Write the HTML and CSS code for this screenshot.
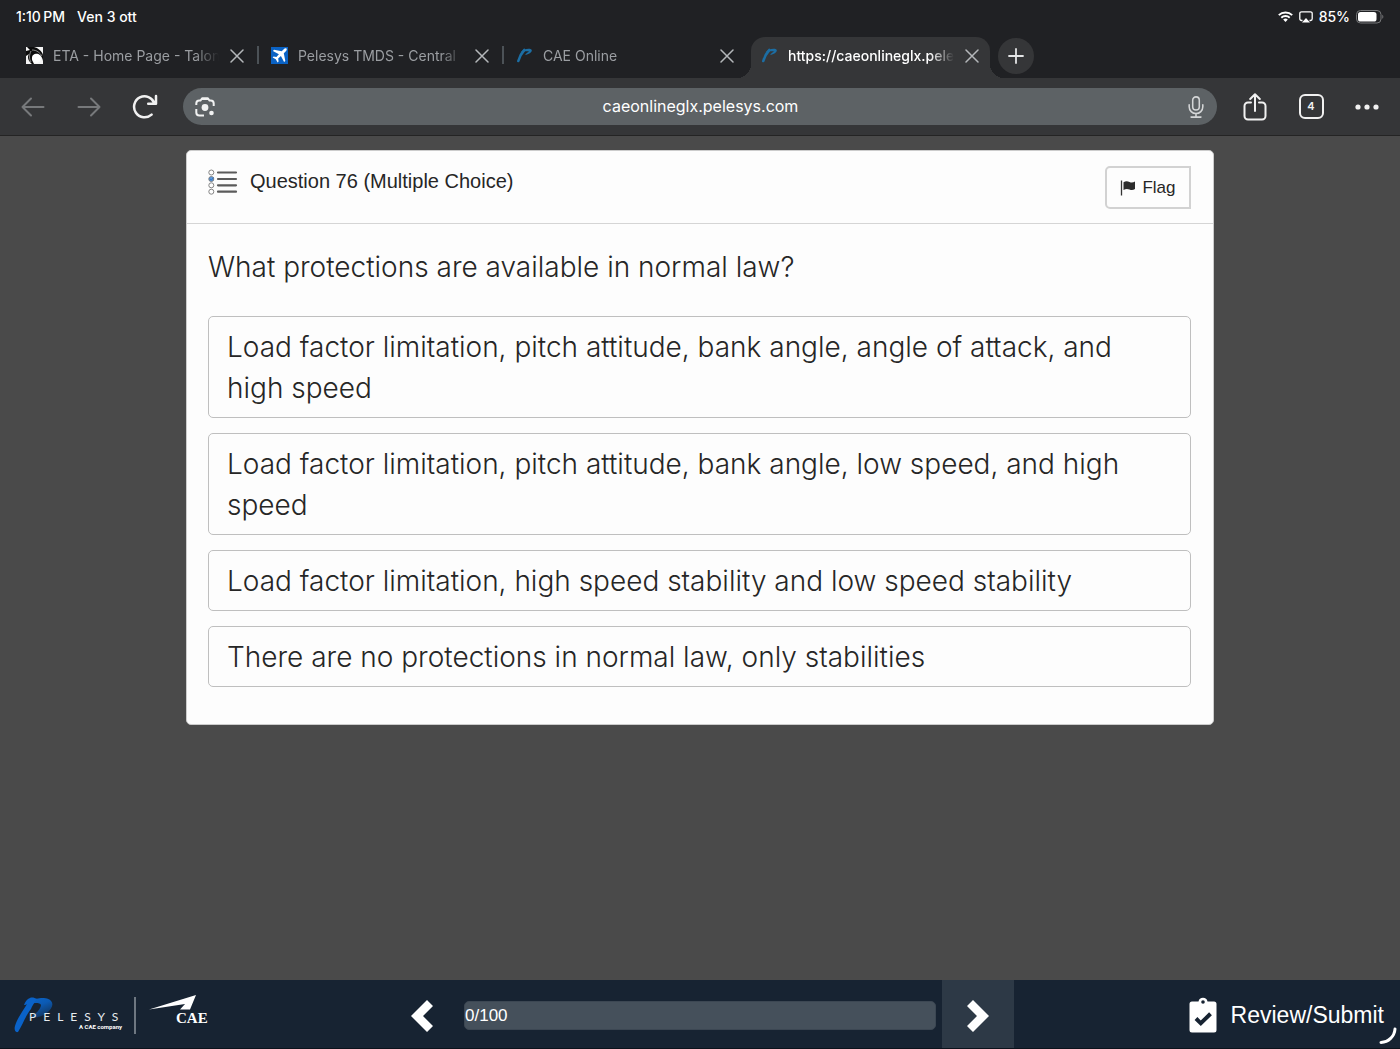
FILE: index.html
```html
<!DOCTYPE html>
<html lang="en">
<head>
<meta charset="utf-8">
<meta name="viewport" content="width=device-width, initial-scale=1">
<title>caeonlineglx.pelesys.com</title>
<link rel="stylesheet" href="styles.css">
</head>
<body>
<svg class="defs" width="0" height="0" aria-hidden="true">
  <symbol id="close" viewBox="0 0 14 14"><path d="M1 1l12 12M13 1L1 13" fill="none" stroke="currentColor" stroke-width="1.5" stroke-linecap="round"/></symbol>
  <symbol id="swoosh" viewBox="0 0 17 17"><path d="M2.300 14C3.500 10 5.500 6 8.300 3" fill="none" stroke="#1c6ea4" stroke-width="2.600" stroke-linecap="round"/><path d="M4.500 5.500C7 2.300 12 1.200 15 2.200C17.500 3.500 14 7.500 9 7.800C10 6.500 11.500 5.500 13 4.500C10 4 7 4.800 4.500 5.500Z" fill="#1c6ea4"/></symbol>
</svg>

<header class="chrome">
  <div class="status">
    <span>1:10&#8201;PM</span>
    <span>Ven 3 ott</span>
    <span class="status-end">
      <svg width="15" height="11" viewBox="0 0 15 11" aria-hidden="true"><g fill="none" stroke="#fff" stroke-width="1.900"><path d="M.8 4.200a9.500 9.500 0 0 1 13.400 0"/><path d="M3.300 6.700a6 6 0 0 1 8.400 0"/></g><path d="M7.500 11L5.200 8.600a3.300 3.300 0 0 1 4.600 0z" fill="#fff"/></svg>
      <svg width="14" height="12" viewBox="0 0 14 12" aria-hidden="true"><path d="M3.500 9.500H2.500A1.700 1.700 0 0 1 .8 7.800V2.500A1.700 1.700 0 0 1 2.500.8h9a1.700 1.700 0 0 1 1.700 1.700v5.300a1.700 1.700 0 0 1-1.700 1.700h-1" fill="none" stroke="#fff" stroke-width="1.300"/><path d="M7 7l4 4.500H3z" fill="#fff"/></svg>
      <span>85%</span>
      <svg width="28" height="14" viewBox="0 0 28 14" aria-hidden="true"><rect x=".5" y=".5" width="24.500" height="12.500" rx="4" fill="none" stroke="#77787a"/><rect x="2" y="2" width="18.500" height="9.500" rx="2.600" fill="#fff"/><path d="M26.300 4.700c1.400.7 1.400 3.400 0 4.100z" fill="#77787a"/></svg>
    </span>
  </div>

  <nav class="tabs" aria-label="Open tabs">
    <div class="tab">
      <svg width="17" height="17" viewBox="0 0 17 17" aria-hidden="true"><path fill="#f4f4f4" d="M0 0h17v17H0z"/><path d="M1 0h7C12 1 16 4 17 8v6C16 8 12 6 9 7c-3 1-4 4-2 8l1 2H6C2 14 1 10 3 7L0 9V4l4-1z" fill="#0c0c0c"/><circle cx="10.500" cy="11.300" r="4.400" fill="#fff"/><path d="M5 4C3 8 3 12 5 15M6 3c5 0 8 3 10 6" stroke="#bbb" stroke-width=".7" fill="none"/></svg>
      <a class="tab-name" href="#eta">ETA - Home Page - Talon</a>
      <button class="tab-close" aria-label="Close tab"><svg width="14" height="14"><use href="#close"/></svg></button>
    </div>
    <div class="tab">
      <svg width="17" height="17" viewBox="0 0 17 17" aria-hidden="true"><path fill="#0a62c4" d="M0 0h17v17H0z"/><path d="M15.500 1.500c-1-.6-2 0-3 1L10.700 4.300 3 2.800 1.900 4l6 3.200-2.500 2.700-2.800-.5-1 1 3.200 1.800 1.800 3.200 1-1-.4-2.800 2.700-2.500 3.200 6 1.200-1.100-1.500-7.700 1.800-1.800c1-1 1.500-2 .9-3z" fill="#fff"/></svg>
      <a class="tab-name" href="#tmds">Pelesys TMDS - Central</a>
      <button class="tab-close" aria-label="Close tab"><svg width="14" height="14"><use href="#close"/></svg></button>
    </div>
    <div class="tab">
      <svg width="17" height="17" aria-hidden="true"><use href="#swoosh"/></svg>
      <a class="tab-name" href="#cae">CAE Online</a>
      <button class="tab-close" aria-label="Close tab"><svg width="14" height="14"><use href="#close"/></svg></button>
    </div>
    <div class="tab tab-active">
      <svg width="17" height="17" aria-hidden="true"><use href="#swoosh"/></svg>
      <a class="tab-name" href="#exam" aria-current="page">https://caeonlineglx.pele</a>
      <button class="tab-close" aria-label="Close tab"><svg width="14" height="14"><use href="#close"/></svg></button>
    </div>
    <button class="tab-new" aria-label="New tab"><svg width="16" height="16" viewBox="0 0 16 16"><path d="M8 1v14M1 8h14" stroke="#e4e5e6" stroke-width="1.800" stroke-linecap="round"/></svg></button>
  </nav>

  <div class="toolbar">
    <button class="tool tool-dim" aria-label="Back"><svg width="24" height="20" viewBox="0 0 24 20"><path d="M22.500 10H1.500M10 1.500L1.500 10l8.500 8.500"/></svg></button>
    <button class="tool tool-dim" aria-label="Forward"><svg width="24" height="20" viewBox="0 0 24 20"><path d="M1.500 10h21M14 1.500l8.500 8.500-8.500 8.500"/></svg></button>
    <button class="tool tool-bold" aria-label="Reload"><svg width="26" height="26" viewBox="0 0 26 26"><path d="M19.600 20.600A10.500 10.500 0 1 1 22.500 9.300M24 2v7.800h-7.800"/></svg></button>
    <div class="address">
      <button class="address-btn" aria-label="Search with camera"><svg width="20" height="20" viewBox="0 0 20 20"><path d="M1.300 8V6.500a3 3 0 0 1 3-3h1.200L7 1.500h6l1.500 2h1.200a3 3 0 0 1 3 3V9M1.300 12v3.500a3 3 0 0 0 3 3H9" fill="none" stroke="#f1f2f2" stroke-width="2"/><path d="M6 3l1.200-2.500h5.600L14 3z" fill="#f1f2f2"/><circle cx="10" cy="10.500" r="3.400" fill="#f1f2f2"/><circle cx="16.500" cy="16" r="2.300" fill="#f1f2f2"/></svg></button>
      <input class="address-input" type="text" aria-label="Address" value="caeonlineglx.pelesys.com">
      <button class="address-btn" aria-label="Voice search"><svg width="16" height="22" viewBox="0 0 14 20"><g fill="none" stroke="#d4d6d7" stroke-width="1.400" stroke-linecap="round"><rect x="4" y=".8" width="6" height="12" rx="3"/><path d="M.8 8v1.800a6.200 6.200 0 0 0 12.400 0V8M7 16v3.200M2.500 19.200h9"/></g></svg></button>
    </div>
    <button class="tool" aria-label="Share"><svg width="24" height="28" viewBox="0 0 24 28"><path d="M8 9.500H5a3.500 3.500 0 0 0-3.500 3.500v10A3.500 3.500 0 0 0 5 26.500h14a3.500 3.500 0 0 0 3.500-3.500V13A3.500 3.500 0 0 0 19 9.500h-3M12 18V1.500M7.200 6L12 1.300 16.800 6"/></svg></button>
    <button class="tool" aria-label="Show tabs"><span class="tab-count">4</span></button>
    <button class="tool" aria-label="More"><svg width="24" height="6" viewBox="0 0 24 6"><g fill="#f1f1f1" stroke="none"><circle cx="3" cy="3" r="2.600"/><circle cx="12" cy="3" r="2.600"/><circle cx="21" cy="3" r="2.600"/></g></svg></button>
  </div>
</header>

<main class="stage">
  <section class="card">
    <div class="card-head">
      <svg class="type-icon" width="30" height="26" viewBox="0 0 30 26" aria-hidden="true"><g fill="#fff" stroke="#777" stroke-width=".9"><circle cx="3.300" cy="3.500" r="2.500"/><circle cx="3.300" cy="10" r="2.500" fill="#5c9be0"/><circle cx="3.300" cy="16.300" r="2.500"/><circle cx="3.300" cy="22.700" r="2.500"/></g><path d="M2 9.700l1.300 1.500L5.500 8.500" fill="none" stroke="#2f74c4"/><path d="M10 3.500h18M10 10h18M10 16.300h18M10 22.700h18" stroke="#5b5b5b" stroke-width="2.200" stroke-linecap="round"/></svg>
      <h1 class="card-title">Question 76 (Multiple Choice)</h1>
      <button class="flag"><svg width="16" height="16" viewBox="0 0 16 16" aria-hidden="true"><path d="M1.500.5v15" stroke="#333" stroke-width="1.300"/><path d="M3.500 2.300c2-1.300 4-1.200 6-.3s3.700.6 5.500-.5v7.600c-1.800 1.100-3.500 1.300-5.500.4s-4-.8-6 .6z" fill="#2b2b2b"/></svg>Flag</button>
    </div>
    <div class="card-body">
      <h2 class="question">What protections are available in normal law?</h2>
      <div class="options">
        <button class="option">Load factor limitation, pitch attitude, bank angle, angle of attack, and high speed</button>
        <button class="option">Load factor limitation, pitch attitude, bank angle, low speed, and high speed</button>
        <button class="option">Load factor limitation, high speed stability and low speed stability</button>
        <button class="option">There are no protections in normal law, only stabilities</button>
      </div>
    </div>
  </section>
</main>

<footer class="bottom">
  <div class="brand">
    <svg width="200" height="40" viewBox="0 0 200 40" role="img" aria-label="Pelesys, a CAE company">
      <defs><linearGradient id="ink" x1="0" y1="0" x2=".6" y2="1"><stop offset="0" stop-color="#0a66cc"/><stop offset=".5" stop-color="#0b5ab4"/><stop offset="1" stop-color="#12365f"/></linearGradient></defs>
      <path d="M10 10C14 5 22 3 30 3c9 1 11 7 5 13-5 5-12 7-20 7 6-3 12-9 12-13-1-3-10-2-17 0z" fill="url(#ink)"/>
      <path d="M16 3c2-1 5 0 7 1-3 4-5 7-6 10C12 20 9 29 4 37c-3 1-4-3-3-6C3 24 8 17 13 9c-1 0-2 1-3 1 1-3 3-6 6-7z" fill="#0a62c8"/>
      <text class="logo-word" x="15" y="26">PELESYS</text>
      <text class="logo-sub" x="65" y="34">A CAE company</text>
      <path d="M121 2v37" stroke="#8d949c" stroke-width="1.500"/>
      <path d="M135 14.500L182 0 176 14.500H166L171 9z" fill="#fff"/>
      <text class="logo-cae" x="162" y="28">CAE</text>
    </svg>
  </div>
  <nav class="pager" aria-label="Questions">
    <button class="page-btn" aria-label="Previous question"><svg width="22" height="32" viewBox="0 0 22 32"><path d="M16 0l6 6-10 10 10 10-6 6L0 16z" fill="#fff"/></svg></button>
    <div class="progress" role="progressbar" aria-valuemin="0" aria-valuemax="100" aria-valuenow="0">0/100</div>
    <button class="page-btn page-next" aria-label="Next question"><svg width="22" height="32" viewBox="0 0 22 32"><path d="M6 0L0 6l10 10L0 26l6 6 16-16z" fill="#fff"/></svg></button>
  </nav>
  <button class="review"><svg width="28" height="36" viewBox="0 0 28 36" aria-hidden="true"><path d="M3 4.500h6.500a4.600 4.600 0 0 1 9 0H25a2.500 2.500 0 0 1 2.500 2.500v26a2.500 2.500 0 0 1-2.500 2.500H3A2.500 2.500 0 0 1 .5 33V7A2.500 2.500 0 0 1 3 4.500z" fill="#fff"/><circle cx="14" cy="5" r="1.800" fill="#172332"/><path d="M7 21.500l4.800 4.800 9.700-9.500" fill="none" stroke="#172332" stroke-width="4"/></svg>Review/Submit</button>
  <svg class="corner" width="18" height="18" viewBox="0 0 18 18" aria-hidden="true"><path d="M16 2A14.500 14.500 0 0 1 2 15.500" fill="none" stroke="#fff" stroke-width="3" stroke-linecap="round"/></svg>
</footer>
</body>
</html>
```
FILE: styles.css
```css
* { box-sizing: border-box; }

body {
  margin: 0;
  min-height: 100vh;
  display: flex;
  flex-direction: column;
  background: #4a4a4a;
  font-family: "Liberation Sans", Arial, sans-serif;
  color: #262626;
}

button {
  margin: 0;
  padding: 0;
  border: 0;
  background: none;
  color: inherit;
  font: inherit;
}

svg { display: block; flex: none; }
.defs { position: absolute; }

/* Browser chrome */
.chrome {
  background: #202124;
  color: #fff;
  font-family: Inter, "Noto Sans", sans-serif;
  border-bottom: 1px solid #242424;
}

.status {
  display: flex;
  align-items: center;
  gap: 12px;
  height: 33px;
  padding: 0 16px;
  font-size: 14px;
  font-weight: 500;
}

.status-end {
  display: flex;
  align-items: center;
  gap: 6px;
  margin-left: auto;
}

.tabs {
  display: flex;
  align-items: center;
  gap: 6px;
  padding: 4px 16px 0;
}

.tab {
  position: relative;
  display: flex;
  align-items: center;
  gap: 10px;
  flex: 0 1 239px;
  min-width: 0;
  height: 41px;
  padding: 0 10px 4px;
  color: #9b9ea2;
}

.tab + .tab::before {
  content: "";
  position: absolute;
  left: -4px;
  top: 9px;
  width: 2px;
  height: 18px;
  background: #4c5257;
}

.tab-name {
  flex: 1;
  min-width: 0;
  overflow: hidden;
  white-space: nowrap;
  color: inherit;
  text-decoration: none;
  font-size: 14px;
  line-height: 20px;
  -webkit-mask-image: linear-gradient(to left, transparent, #000 24px);
  mask-image: linear-gradient(to left, transparent, #000 24px);
}

.tab-close {
  display: flex;
  padding: 0 1px;
  color: #b4b7ba;
}

.tab-active {
  background: #353638;
  border-radius: 14px 14px 0 0;
  color: #fff;
}

.tab-active .tab-name { font-weight: 500; }

/* Flared feet where the active tab meets the toolbar */
.tab.tab-active::before,
.tab.tab-active::after {
  content: "";
  position: absolute;
  top: auto;
  bottom: 0;
  width: 14px;
  height: 14px;
}

.tab.tab-active::before {
  left: -14px;
  background: radial-gradient(circle at 0 0, transparent 14px, #353638 14px);
}

.tab.tab-active::after {
  right: -14px;
  background: radial-gradient(circle at 100% 0, transparent 14px, #353638 14px);
}

.tab-new {
  display: flex;
  align-items: center;
  justify-content: center;
  width: 36px;
  height: 36px;
  margin: 0 0 4px 2px;
  border-radius: 50%;
  background: #353638;
}

.toolbar {
  display: flex;
  align-items: center;
  gap: 16px;
  height: 57px;
  padding: 0 13px;
  background: #353638;
}

.tool {
  display: flex;
  align-items: center;
  justify-content: center;
  width: 40px;
  height: 40px;
  color: #f1f1f1;
}

.tool svg {
  fill: none;
  stroke: currentColor;
  stroke-width: 2;
  stroke-linecap: round;
  stroke-linejoin: round;
}

.tool-dim { color: #77797b; }
.tool-bold svg { stroke-width: 2.5; }

.tab-count {
  width: 25px;
  height: 25px;
  border: 2px solid #f1f1f1;
  border-radius: 6px;
  font-size: 11px;
  font-weight: 600;
  line-height: 21px;
  text-align: center;
}

.address {
  display: flex;
  align-items: center;
  flex: 1;
  min-width: 0;
  height: 37px;
  margin: 0 2px;
  padding: 0 11px 0 12px;
  border-radius: 19px;
  background: #5d6265;
}

.address-btn {
  display: flex;
  justify-content: center;
  width: 20px;
}

.address-input {
  flex: 1;
  min-width: 0;
  padding: 0 0 2px;
  border: 0;
  outline: 0;
  background: none;
  color: #fff;
  font: inherit;
  font-size: 16px;
  text-align: center;
}

/* Question card */
.stage {
  flex: 1;
  padding: 14px 16px;
}

.card {
  max-width: 1028px;
  margin: 0 auto;
  border: 1px solid #ccc;
  border-radius: 5px;
  background: #fdfdfd;
}

.card-head {
  display: flex;
  align-items: flex-start;
  gap: 12px;
  padding: 15px 22px 14px 21px;
  border-bottom: 1px solid #d5d5d5;
}

.type-icon { margin-top: 3px; }

.card-title {
  flex: 1;
  margin: 3px 0 0;
  font-size: 20px;
  font-weight: 400;
  line-height: 24px;
}

.flag {
  display: flex;
  align-items: center;
  justify-content: center;
  gap: 6px;
  width: 86px;
  height: 43px;
  border: 2px solid #d2d2d2;
  border-radius: 5px 0 0 5px;
  font-size: 17px;
}

.card-body { padding: 23px 22px 37px 21px; }

.question {
  margin: 0 0 28px;
  font-family: Inter, "Noto Sans", sans-serif;
  font-size: 28px;
  font-weight: 300;
  line-height: 41px;
}

.options {
  display: flex;
  flex-direction: column;
  gap: 15px;
}

.option {
  padding: 10px 18px 8px;
  border: 1px solid #bfbfbf;
  border-radius: 5px;
  font-family: Inter, "Noto Sans", sans-serif;
  font-size: 28px;
  font-weight: 300;
  line-height: 41px;
  text-align: left;
}

/* Bottom bar */
.bottom {
  position: relative;
  display: grid;
  grid-template-columns: 1fr minmax(0, 628px) 1fr;
  align-items: center;
  height: 69px;
  background: #172332;
  border-bottom: 1px solid #0b121b;
  color: #fff;
}

.brand { padding: 1px 0 0 14px; }

.logo-word {
  fill: #e8ecf0;
  font-family: Lato, sans-serif;
  font-size: 12px;
  letter-spacing: 7px;
}

.logo-sub {
  fill: #fff;
  font-family: Roboto, sans-serif;
  font-size: 6px;
  font-weight: 700;
}

.logo-cae {
  fill: #fff;
  font-family: "Liberation Serif", serif;
  font-size: 15px;
  font-weight: 700;
}

.pager {
  display: flex;
  align-items: center;
  align-self: stretch;
  gap: 6px;
}

.page-btn {
  display: flex;
  align-items: center;
  justify-content: center;
  align-self: stretch;
  width: 72px;
  padding-top: 3px;
}

.page-next { background: #2d3946; }

.progress {
  flex: 1;
  height: 29px;
  margin-top: 3px;
  border: 1px solid #3c4753;
  border-radius: 5px;
  background: #45505b;
  font-size: 17px;
  line-height: 27px;
}

.review {
  display: flex;
  align-items: center;
  gap: 14px;
  justify-self: end;
  padding: 2px 16px 0 0;
  font-size: 23px;
}

.corner {
  position: absolute;
  right: 3px;
  bottom: 3px;
}
```
